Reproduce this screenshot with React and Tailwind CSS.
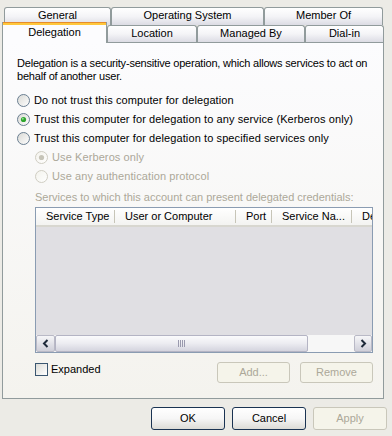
import React from 'react';

const Radio = ({ checked = false, disabled = false }) => (
  <svg width="13" height="13" viewBox="0 0 13 13" className="shrink-0">
    <defs>
      <linearGradient id={disabled ? 'radioFillDis' : 'radioFill'} x1="0" y1="0" x2="1" y2="1">
        <stop offset="0" stopColor={disabled ? '#f3f2ec' : '#d8d8d4'} />
        <stop offset="1" stopColor="#ffffff" />
      </linearGradient>
    </defs>
    <circle cx="6.5" cy="6.5" r="6" fill={`url(#${disabled ? 'radioFillDis' : 'radioFill'})`} stroke={disabled ? '#cfcdc2' : '#6b7f92'} />
    {checked && <circle cx="6.5" cy="6.5" r="2.6" fill={disabled ? '#c6c4b8' : '#2da52d'} />}
    {checked && !disabled && <circle cx="5.8" cy="5.8" r="1" fill="#8fdc8f" />}
  </svg>
);

const Chevron = ({ dir }) => (
  <svg width="8" height="9" viewBox="0 0 8 9">
    <polyline points={dir === 'left' ? '5.5,1 2,4.5 5.5,8' : '2.5,1 6,4.5 2.5,8'} fill="none" stroke="#1e2a3a" strokeWidth="2" />
  </svg>
);

const Tab = ({ label, w, selected }) => (
  selected ? (
    <div className="relative z-10 -mb-px flex h-[21px] w-[105px] shrink-0 flex-col border-x border-[#919b9c] bg-[#fcfcfe]">
      <div className="h-px bg-[#e68b2c]" />
      <div className="h-[2px] bg-[#ffc73c]" />
      <div className="flex flex-1 items-center justify-center pb-[3px]">{label}</div>
    </div>
  ) : (
    <div className={`${w} flex h-full shrink-0 items-start justify-center rounded-t-[3px] border border-b-0 border-[#919b9c] bg-gradient-to-b from-white via-[#f4f4f7] to-[#dcdce4] pt-[1px]`}>
      {label}
    </div>
  )
);

const XpButton = ({ label, disabled, w = 'w-[74px]', h = 'h-[23px]' }) => (
  <div className={`${w} ${h} flex items-center justify-center rounded-[3px] border ${disabled
    ? 'border-[#c9c7ba] bg-[#f5f4ea] text-[#aca899]'
    : 'border-[#1a3352] bg-gradient-to-b from-white via-[#f6f6f6] to-[#dcdbd6] text-black'}`}>
    {label}
  </div>
);

const columns = [
  { label: 'Service Type', w: 'w-[79px]' },
  { label: 'User or Computer', w: 'w-[121px]' },
  { label: 'Port', w: 'w-[36px]' },
  { label: 'Service Na...', w: 'w-[80px]' },
  { label: 'De', w: 'w-[40px]' },
];

export default function App() {
  return (
    <div className="h-[436px] w-[392px] overflow-hidden bg-[#ecebe6] pt-[7px] font-['Liberation_Sans',Arial,sans-serif] text-[11px] leading-[13px] text-black">
      {/* tabs */}
      <div className="flex h-[18px] pl-[4px]">
        <Tab label="General" w="w-[107px]" />
        <Tab label="Operating System" w="w-[153px]" />
        <Tab label="Member Of" w="w-[119px]" />
      </div>
      <div className="flex h-[17px] items-end pl-[2px]">
        <Tab label="Delegation" selected />
        <div className="flex h-full">
          <Tab label="Location" w="w-[90px]" />
          <Tab label="Managed By" w="w-[108px]" />
          <Tab label="Dial-in" w="w-[79px]" />
        </div>
      </div>

      {/* panel */}
      <div className="ml-[2px] w-[382px] border border-[#919b9c] bg-gradient-to-b from-[#fcfcfe] to-[#f4f3ee] pb-[15px] pl-[14px] pt-[14px]">
        <p className="tracking-[-0.2px]">
          Delegation is a security-sensitive operation, which allows services to act on
          <br />
          behalf of another user.
        </p>

        <div className="mt-[8px] flex flex-col tracking-[0.1px]">
          <div className="flex h-[19px] items-center gap-[4px]"><Radio /><span>Do not trust this computer for delegation</span></div>
          <div className="flex h-[19px] items-center gap-[4px]"><Radio checked /><span>Trust this computer for delegation to any service (Kerberos only)</span></div>
          <div className="flex h-[19px] items-center gap-[4px]"><Radio /><span>Trust this computer for delegation to specified services only</span></div>
          <div className="ml-[18px] flex h-[19px] items-center gap-[4px] text-[#aca899]"><Radio checked disabled /><span>Use Kerberos only</span></div>
          <div className="ml-[18px] flex h-[19px] items-center gap-[4px] text-[#aca899]"><Radio disabled /><span>Use any authentication protocol</span></div>
        </div>

        <div className="ml-[18px] w-[338px]">
          <p className="mt-[5px] text-[#aca899]">Services to which this account can present delegated credentials:</p>

          {/* list view */}
          <div className="mt-[3px] flex h-[146px] flex-col border border-[#8a9cb2] bg-[#e0dfe3]">
            <div className="flex h-[19px] shrink-0 overflow-hidden border-b-2 border-[#d8d7d0] bg-gradient-to-b from-white to-[#f3f3f1]">
              {columns.map((c, i) => (
                <div key={c.label} className={`${c.w} my-[2px] flex shrink-0 items-center pl-[10px] ${i < columns.length - 1 ? 'border-r border-[#c7c5b8]' : ''}`}>
                  <span className="whitespace-nowrap">{c.label}</span>
                </div>
              ))}
            </div>
            <div className="flex-1" />
            {/* scrollbar */}
            <div className="flex h-[17px] shrink-0 bg-[#f7f7f7]">
              <div className="flex w-[19px] items-center justify-center rounded-[2px] border border-[#b9b9c6] bg-gradient-to-b from-[#f6f6f8] to-[#cfcfd9]">
                <Chevron dir="left" />
              </div>
              <div className="flex w-[253px] items-center justify-center rounded-[2px] border border-[#b4b4c4] bg-gradient-to-b from-[#fbfbfc] via-[#ececf1] to-[#d4d4de]">
                <div className="flex gap-[1px]">
                  {[0, 1, 2, 3].map((i) => (
                    <div key={i} className="h-[7px] w-px bg-[#9a9aae]" />
                  ))}
                </div>
              </div>
              <div className="flex-1" />
              <div className="flex w-[18px] items-center justify-center rounded-[2px] border border-[#b9b9c6] bg-gradient-to-b from-[#f6f6f8] to-[#cfcfd9]">
                <Chevron dir="right" />
              </div>
            </div>
          </div>

          <div className="mt-[9px] flex h-[21px] items-start">
            <div className="flex items-center gap-[3px] pt-[1px]">
              <div className="h-[13px] w-[13px] border border-[#3a5670] bg-gradient-to-br from-[#dcdcd7] to-white" />
              <span>Expanded</span>
            </div>
            <div className="ml-auto flex gap-[10px]">
              <XpButton label="Add..." disabled w="w-[73px]" h="h-[21px]" />
              <XpButton label="Remove" disabled w="w-[73px]" h="h-[21px]" />
            </div>
          </div>
        </div>
      </div>

      {/* dialog buttons */}
      <div className="mt-[8px] flex justify-end gap-[7px] pr-[5px]">
        <XpButton label="OK" />
        <XpButton label="Cancel" />
        <XpButton label="Apply" disabled />
      </div>
    </div>
  );
}
